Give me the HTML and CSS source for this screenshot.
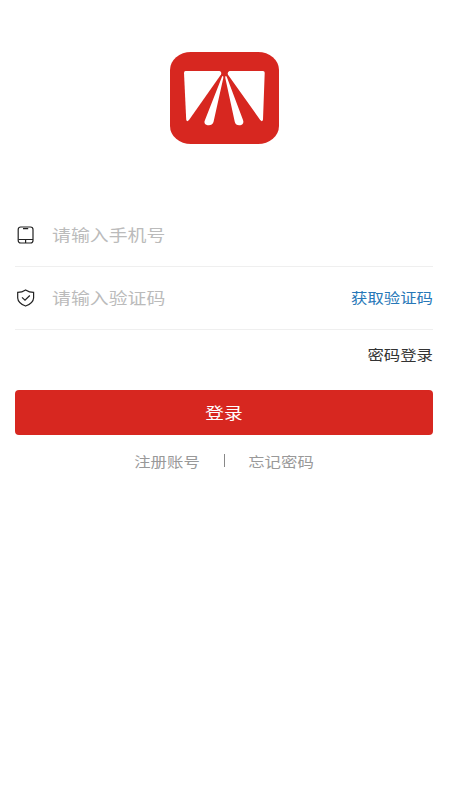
FILE: index.html
```html
<!DOCTYPE html>
<html lang="zh-CN">
<head>
    <meta charset="UTF-8">
    <meta name="viewport" content="width=device-width, initial-scale=1.0">
    <title>登录</title>
    <link rel="stylesheet" href="styles.css">
</head>
<body>
    <div class="logo">
        <svg width="109" height="92" viewBox="0 0 109 92">
            <rect width="109" height="92" rx="21" ry="18" fill="#d72720"/>
            <g fill="#fff">
                <path d="M15.5 19H49.5Q52 20 51 22.5L19 68Q16.8 70.5 16.2 67.5L14 21Q14 19 15.5 19Z"/>
                <path d="M59.5 19H93Q94.8 19 94.7 21L93 67.5Q92.4 70.5 90.2 68L58 22.8Q57 20 59.5 19Z"/>
                <path d="M52.7 24Q53.6 24 53.3 26L43.5 70Q42 74 37.5 73.2Q33 72 35 68L51.5 26Q52 24 52.7 24Z"/>
                <path d="M55.9 24Q56.6 24 57.2 26L73 68Q74.5 72 70.5 73.2Q66 74 64.8 70L55.3 26Q55 24 55.9 24Z"/>
            </g>
        </svg>
    </div>

    <form class="login-form">
        <div class="row">
            <svg class="icon" width="18" height="18" viewBox="0 0 18 18" fill="none" stroke="#222" stroke-width="1.2">
                <rect x="1.2" y="1" width="14.8" height="16" rx="2.5"/>
                <path d="M6 2.6H11.2M1.5 13.5H16M8.6 13.5V17"/>
            </svg>
            <input type="text" id="phone" placeholder="请输入手机号">
        </div>
        <div class="row">
            <svg class="icon" width="18" height="18" viewBox="0 0 18 18" fill="none" stroke="#222" stroke-width="1.2">
                <path d="M8.6 .9Q12.3 3.3 16.6 3.4V9Q16.3 14.2 8.6 17Q1 14.2 .7 9V3.4Q5 3.3 8.6 .9Z"/>
                <path d="M5 8.4L8 11.2L12.8 6.5"/>
            </svg>
            <input type="text" id="code" placeholder="请输入验证码">
            <a class="get-code">获取验证码</a>
        </div>
        <div class="switch"><a>密码登录</a></div>
        <button type="submit" class="login-btn"><span>登录</span></button>
    </form>

    <div class="links">
        <a>注册账号</a>
        <i class="divider"></i>
        <a>忘记密码</a>
    </div>
</body>
</html>
```
FILE: styles.css
```css
* {
    box-sizing: border-box;
}

body {
    margin: 0;
    padding: 52px 17px 0 15px;
    background-color: #fff;
    font-family: "Noto Sans CJK SC", sans-serif;
    font-size: 14px;
    color: #333;
}

.logo {
    height: 152px;
    padding-left: 155px;
}

.logo svg, .icon {
    display: block;
}

.row {
    display: flex;
    align-items: center;
    height: 63px;
    border-bottom: 1px solid #efefef;
}

.icon {
    flex: none;
    margin: 0 17px 0 2px;
}

input {
    width: 200px;
    height: 40px;
    padding: 0 0 2px;
    border: none;
    outline: none;
    background: transparent;
    font-family: inherit;
    font-size: 16px;
    /* wide lettering */
    transform: scaleX(1.18);
    transform-origin: left;
}

input::placeholder {
    color: #bbb;
}

.get-code {
    margin-left: auto;
    padding-bottom: 2px;
    color: #2878b8;
}

.get-code, .switch a {
    transform: scaleX(1.17);
    transform-origin: right;
}

.switch {
    display: flex;
    justify-content: flex-end;
    align-items: center;
    height: 50px;
    padding-bottom: 3px;
}

.login-btn {
    display: block;
    width: 100%;
    height: 45px;
    margin-top: 10px;
    padding: 0 0 2px;
    border: none;
    border-radius: 4px;
    background-color: #d72720;
    color: #fff;
    font-family: inherit;
    font-size: 16px;
}

.login-btn span {
    display: inline-block;
    transform: scaleX(1.17);
}

.links {
    display: flex;
    justify-content: center;
    align-items: center;
    height: 51px;
    color: #999;
}

.links a {
    transform: scaleX(1.17);
}

.divider {
    width: 1px;
    height: 13px;
    margin: 0 28px 0 29px;
    background-color: #888;
}
```
